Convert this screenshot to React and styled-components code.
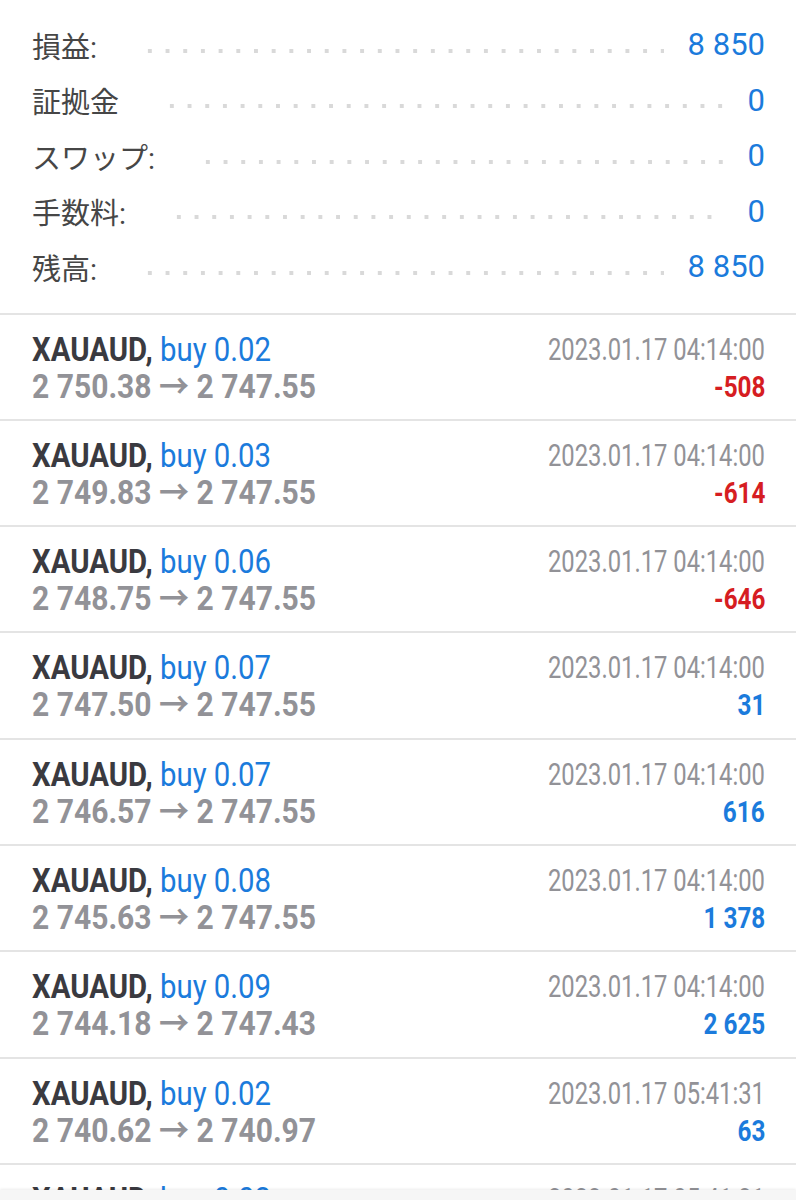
import React from "react";
import styled, { createGlobalStyle } from "styled-components";

const summary = [
  { label: "損益:", value: "8 850" },
  { label: "証拠金", value: "0" },
  { label: "スワップ:", value: "0" },
  { label: "手数料:", value: "0" },
  { label: "残高:", value: "8 850" },
];

const trades = [
  { lot: "0.02", open: "2 750.38", close: "2 747.55", time: "2023.01.17 04:14:00", profit: "-508" },
  { lot: "0.03", open: "2 749.83", close: "2 747.55", time: "2023.01.17 04:14:00", profit: "-614" },
  { lot: "0.06", open: "2 748.75", close: "2 747.55", time: "2023.01.17 04:14:00", profit: "-646" },
  { lot: "0.07", open: "2 747.50", close: "2 747.55", time: "2023.01.17 04:14:00", profit: "31" },
  { lot: "0.07", open: "2 746.57", close: "2 747.55", time: "2023.01.17 04:14:00", profit: "616" },
  { lot: "0.08", open: "2 745.63", close: "2 747.55", time: "2023.01.17 04:14:00", profit: "1 378" },
  { lot: "0.09", open: "2 744.18", close: "2 747.43", time: "2023.01.17 04:14:00", profit: "2 625" },
  { lot: "0.02", open: "2 740.62", close: "2 740.97", time: "2023.01.17 05:41:31", profit: "63" },
  { lot: "0.02", open: "2 740.62", close: "2 740.97", time: "2023.01.17 05:41:31", profit: "63" },
];

const GlobalStyle = createGlobalStyle`
  body {
    margin: 0;
    background: #fff;
    font-family: Roboto, "Noto Sans CJK JP", sans-serif;
    overflow: hidden;
  }
`;

const Page = styled.div`
  width: 796px;
  height: 1200px;
  overflow: hidden;
  background: #fff;
`;

const Summary = styled.div`
  padding: 17px 31px 18px 32px;
  border-bottom: 2px solid #e4e4e4;
`;

const SumRow = styled.div`
  display: flex;
  align-items: center;
  height: 55.5px;
`;

const Label = styled.span`
  font-family: Roboto, "Noto Sans CJK JP", sans-serif;
  font-size: 29px;
  color: #464646;
  white-space: nowrap;
`;

const Leader = styled.span`
  flex: 1;
  height: 6px;
  margin: 12px 24px 0 44px;
  background-image: radial-gradient(circle, #d9d9d9 2.1px, transparent 2.5px);
  background-size: 17.7px 6px;
  background-repeat: repeat-x;
`;

const Value = styled.span`
  font-size: 31px;
  color: #1b7bdc;
  white-space: nowrap;
`;

const Trade = styled.div`
  display: flex;
  justify-content: space-between;
  height: 106.3px;
  padding: 16px 31px 0 32px;
  box-sizing: border-box;
  border-bottom: 2px solid #e4e4e4;
`;

const Col = styled.div`
  display: flex;
  flex-direction: column;
  align-items: ${(p) => (p.$right ? "flex-end" : "flex-start")};
`;

const Line = styled.div`
  display: inline-block;
  height: 37px;
  line-height: 37px;
  white-space: nowrap;
  font-size: ${(p) => p.$size || 33}px;
  font-weight: ${(p) => (p.$bold ? 700 : 400)};
  color: ${(p) => p.$color || "#3b3b40"};
  transform: scaleX(${(p) => p.$squeeze || 0.89});
  transform-origin: ${(p) => (p.$right ? "right" : "left")} center;
`;

const Symbol = styled.span`
  font-weight: 700;
  color: #3a3a40;
`;

const Buy = styled.span`
  color: #1b7bdc;
`;

const BottomBar = styled.div`
  position: fixed;
  left: 0;
  right: 0;
  bottom: 0;
  height: 10px;
  background: #f6f6f6;
  box-shadow: 0 -1px 3px rgba(0, 0, 0, 0.08);
`;

export default function App() {
  return (
    <Page>
      <GlobalStyle />
      <Summary>
        {summary.map((s, i) => (
          <SumRow key={i}>
            <Label>{s.label}</Label>
            <Leader />
            <Value>{s.value}</Value>
          </SumRow>
        ))}
      </Summary>
      {trades.map((t, i) => (
        <Trade key={i}>
          <Col>
            <Line>
              <Symbol>XAUAUD,</Symbol> <Buy>buy {t.lot}</Buy>
            </Line>
            <Line $bold $squeeze={0.91} $color="#929297">
              {t.open} → {t.close}
            </Line>
          </Col>
          <Col $right>
            <Line $right $size={31} $squeeze={0.767} $color="#929297">
              {t.time}
            </Line>
            <Line
              $right
              $bold
              $size={30}
              $squeeze={0.81}
              $color={t.profit.startsWith("-") ? "#d61d22" : "#1b7bdc"}
            >
              {t.profit}
            </Line>
          </Col>
        </Trade>
      ))}
      <BottomBar />
    </Page>
  );
}
